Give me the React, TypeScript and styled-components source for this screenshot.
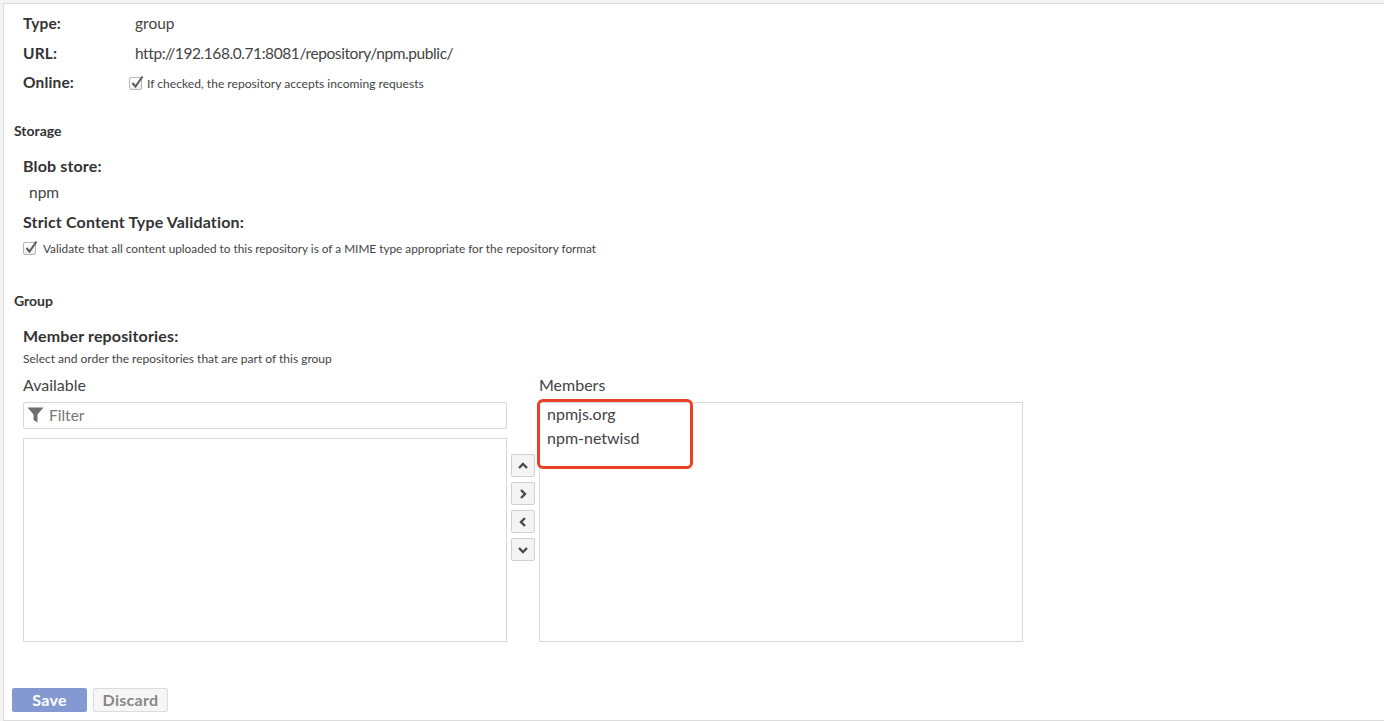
import React from 'react'
import styled, { createGlobalStyle } from 'styled-components'

const GlobalStyle = createGlobalStyle`
  html, body {
    margin: 0;
    padding: 0;
    background: #f3f3f3;
  }
  body {
    font-family: Lato, "Liberation Sans", sans-serif;
    color: #333;
  }
`

const Shell = styled.div`
  box-sizing: border-box;
  width: 1384px;
  height: 721px;
  overflow: hidden;
  padding: 3px 0 0 3px;
  background: #f3f3f3;
`

const Panel = styled.div`
  box-sizing: border-box;
  height: 718px;
  border-top: 1px solid #dcdcdc;
  border-bottom: 1px solid #dcdcdc;
  border-left: 1px solid #dcdcdc;
  background: #fff;
  position: relative;
`

const Form = styled.div`
  padding-left: 8px;
`

const Section = styled.div`
  padding-left: 11px;
`

const Row = styled.div<{ $h: number }>`
  display: flex;
  align-items: center;
  height: ${(p) => p.$h}px;
`

const RowLabel = styled.div`
  width: 112px;
  font-size: 15.5px;
  font-weight: 700;
  letter-spacing: 0.15px;
  color: #333;
`

const Value = styled.div`
  font-size: 15.5px;
  color: #444;
`

const UrlValue = styled(Value)`
  letter-spacing: -0.42px;
`

const Heading = styled.div<{ $top: number; $bottom: number }>`
  font-size: 14px;
  line-height: 16px;
  font-weight: 700;
  padding-left: 2px;
  color: #333;
  margin-top: ${(p) => p.$top}px;
  margin-bottom: ${(p) => p.$bottom}px;
`

const FieldLabel = styled.div`
  font-size: 16px;
  line-height: 20px;
  font-weight: 700;
  letter-spacing: 0.15px;
  color: #333;
`

const PlainValue = styled.div`
  font-size: 15.5px;
  line-height: 20px;
  color: #444;
  padding-left: 6px;
`

const CheckRow = styled.label<{ $offset?: number; $down?: number; $size: number; $gap: number }>`
  display: flex;
  align-items: center;
  gap: ${(p) => p.$gap}px;
  font-size: ${(p) => p.$size}px;
  color: #444;
  margin-left: ${(p) => p.$offset ?? 0}px;
  margin-top: ${(p) => p.$down ?? 0}px;
`

const CheckBox = styled.span`
  box-sizing: border-box;
  position: relative;
  display: block;
  width: 13px;
  height: 13px;
  border: 1px solid #b5b5b5;
  border-radius: 2px;
  background: linear-gradient(#fff, #ececec);

  svg {
    position: absolute;
    left: 0;
    top: -4px;
  }
`

const Hint = styled.div`
  font-size: 12px;
  line-height: 14px;
  color: #444;
`

const Transfer = styled.div`
  display: flex;
  align-items: flex-start;
  margin-top: 9px;
`

const Column = styled.div`
  width: 484px;
`

const ColumnTitle = styled.div`
  font-size: 16px;
  line-height: 20px;
  color: #444;
  margin-bottom: 7px;
`

const FilterBox = styled.div`
  box-sizing: border-box;
  display: flex;
  align-items: center;
  gap: 5px;
  height: 27px;
  padding: 0 0 1px 3px;
  border: 1px solid #d8d8d8;
  border-radius: 2px;
  font-size: 15.5px;
  color: #777;
  margin-bottom: 9px;
`

const ListBox = styled.div<{ $h: number }>`
  box-sizing: border-box;
  height: ${(p) => p.$h}px;
  border: 1px solid #d8d8d8;
  padding: 0 7px;
`

const ListItem = styled.div`
  height: 24px;
  font-size: 16px;
  line-height: 22px;
  color: #444;
`

const Arrows = styled.div`
  display: flex;
  flex-direction: column;
  gap: 5px;
  width: 24px;
  margin: 79px 4px 0;
`

const ArrowButton = styled.button`
  box-sizing: border-box;
  display: flex;
  align-items: center;
  justify-content: center;
  width: 24px;
  height: 23px;
  padding: 0;
  border: 1px solid #d0d0d0;
  border-radius: 2px;
  background: #f4f4f4;
`

const Callout = styled.div`
  position: absolute;
  box-sizing: border-box;
  left: 533px;
  top: 395px;
  width: 156px;
  height: 70px;
  border: 3px solid #ea4126;
  border-radius: 6px;
`

const Actions = styled.div`
  display: flex;
  gap: 6px;
  margin-top: 46px;
`

const SaveButton = styled.button`
  width: 75px;
  height: 24px;
  padding: 0 0 2px;
  border: 1px solid #8499d2;
  border-radius: 2px;
  background: #8499d2;
  color: #fff;
  font: 700 16px Lato, "Liberation Sans", sans-serif;
  letter-spacing: 0.3px;
`

const DiscardButton = styled.button`
  box-sizing: border-box;
  width: 75px;
  height: 24px;
  padding: 0 0 2px;
  border: 1px solid #dcdcdc;
  border-radius: 2px;
  background: #f6f6f6;
  color: #888;
  font: 700 16px Lato, "Liberation Sans", sans-serif;
  letter-spacing: 0.3px;
`

const Check: React.FC = () => (
  <CheckBox>
    <svg width="15" height="16" viewBox="0 0 15 16" fill="none">
      <path d="M2.5 9 L5.5 12.5 L12.5 2.5" stroke="#5a5a5a" strokeWidth="2" />
    </svg>
  </CheckBox>
)

const Chevron: React.FC<{ d: string }> = ({ d }) => (
  <svg width="12" height="12" viewBox="0 0 12 12" fill="none">
    <path d={d} stroke="#4a4a4a" strokeWidth="2.4" />
  </svg>
)

const App: React.FC = () => (
  <>
    <GlobalStyle />
    <Shell>
      <Panel>
        <Form>
          <Section>
            <Row $h={30} style={{ marginTop: 4 }}>
              <RowLabel>Type:</RowLabel>
              <Value>group</Value>
            </Row>
            <Row $h={29}>
              <RowLabel>URL:</RowLabel>
              <UrlValue>http://192.168.0.71:8081/repository/npm.public/</UrlValue>
            </Row>
            <Row $h={30}>
              <RowLabel>Online:</RowLabel>
              <CheckRow $offset={-6} $down={2} $size={12.1} $gap={5}>
                <Check />
                If checked, the repository accepts incoming requests
              </CheckRow>
            </Row>
          </Section>
          <Heading $top={26} $bottom={17}>Storage</Heading>
          <Section>
            <FieldLabel>Blob store:</FieldLabel>
            <PlainValue style={{ marginTop: 6 }}>npm</PlainValue>
            <FieldLabel style={{ marginTop: 10 }}>Strict Content Type Validation:</FieldLabel>
            <Row $h={20} style={{ marginTop: 6 }}>
              <CheckRow $size={11.8} $gap={7}>
                <Check />
                Validate that all content uploaded to this repository is of a MIME type appropriate for the repository format
              </CheckRow>
            </Row>
          </Section>
          <Heading $top={35} $bottom={17}>Group</Heading>
          <Section>
            <FieldLabel>Member repositories:</FieldLabel>
            <Hint style={{ marginTop: 6 }}>Select and order the repositories that are part of this group</Hint>
            <Transfer>
              <Column>
                <ColumnTitle>Available</ColumnTitle>
                <FilterBox>
                  <svg width="17" height="16" viewBox="0 0 17 16">
                    <path d="M0.5 0.5 H16.5 L10.5 7.5 V15.5 L6.5 13 V7.5 Z" fill="#6e6e6e" />
                  </svg>
                  Filter
                </FilterBox>
                <ListBox $h={204} />
              </Column>
              <Arrows>
                <ArrowButton><Chevron d="M2 8 L6 4 L10 8" /></ArrowButton>
                <ArrowButton><Chevron d="M4 2 L8 6 L4 10" /></ArrowButton>
                <ArrowButton><Chevron d="M8 2 L4 6 L8 10" /></ArrowButton>
                <ArrowButton><Chevron d="M2 4 L6 8 L10 4" /></ArrowButton>
              </Arrows>
              <Column>
                <ColumnTitle>Members</ColumnTitle>
                <ListBox $h={240}>
                  <ListItem>npmjs.org</ListItem>
                  <ListItem>npm-netwisd</ListItem>
                </ListBox>
              </Column>
            </Transfer>
          </Section>
          <Actions>
            <SaveButton>Save</SaveButton>
            <DiscardButton>Discard</DiscardButton>
          </Actions>
        </Form>
        <Callout />
      </Panel>
    </Shell>
  </>
)

export default App
